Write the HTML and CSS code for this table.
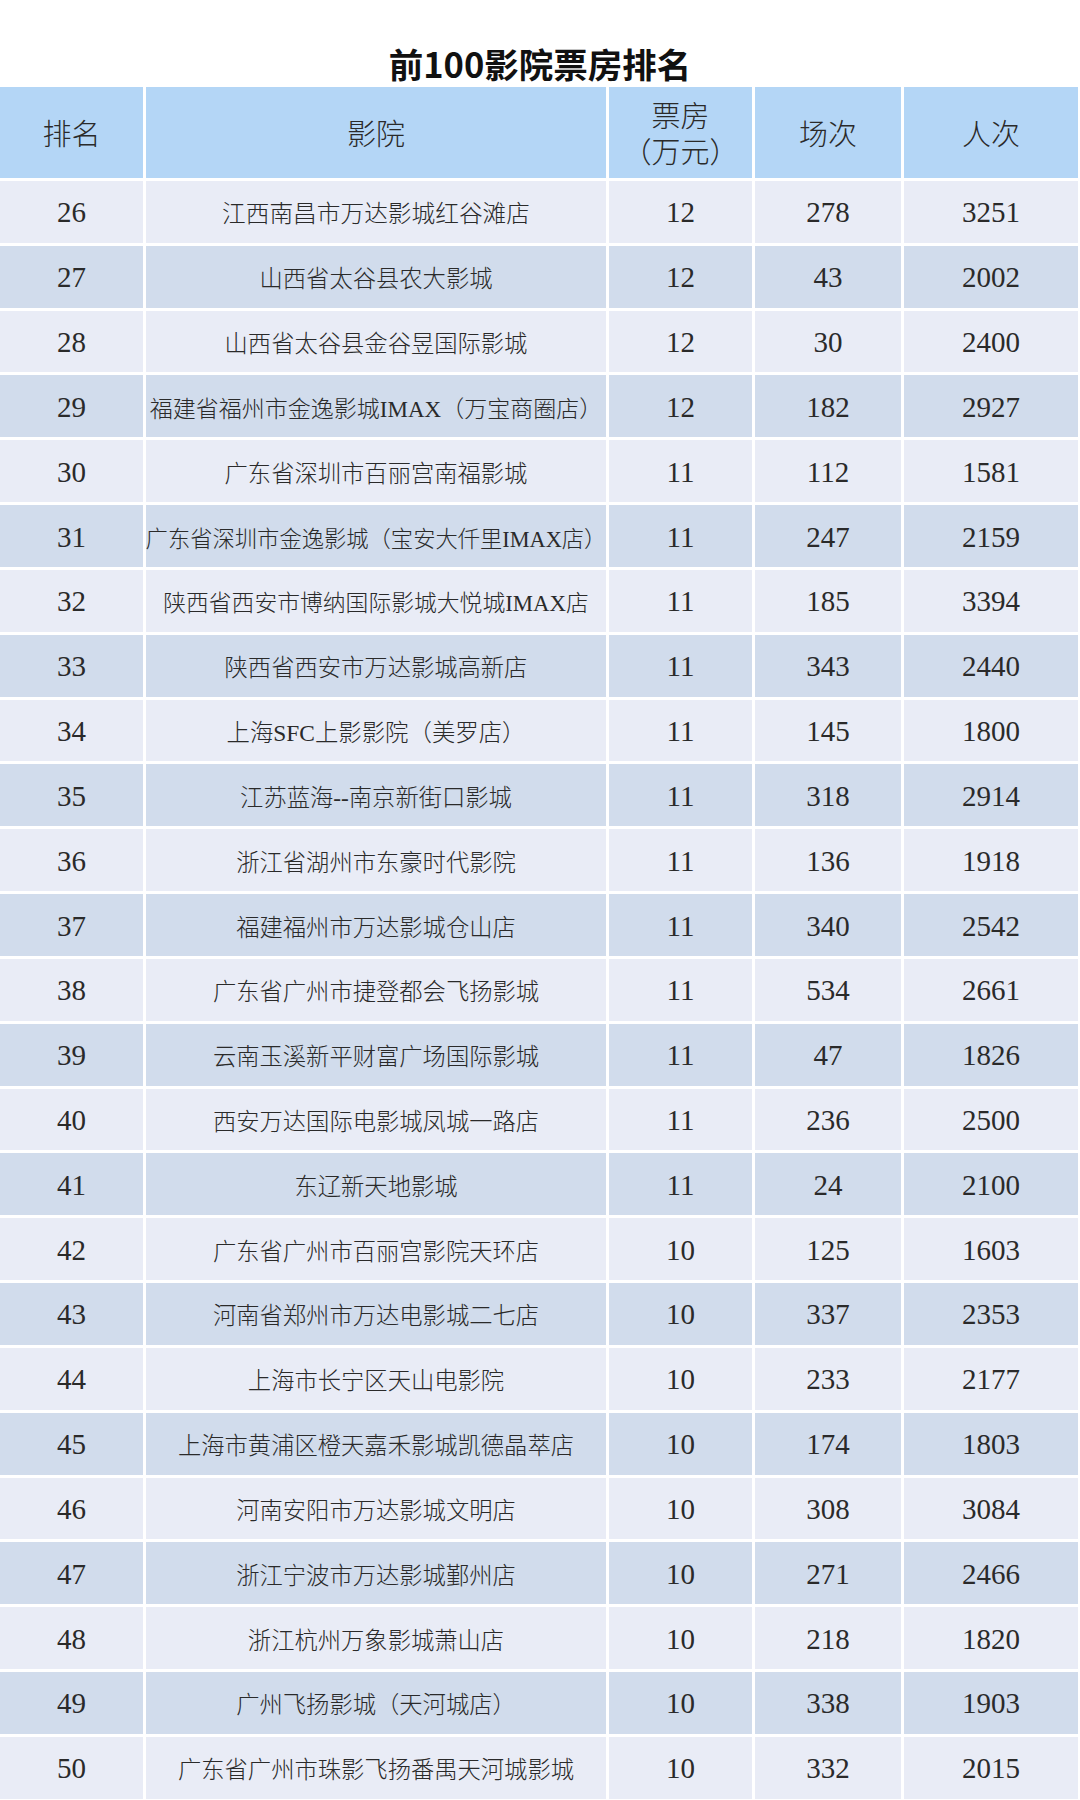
FILE: index.html
```html
<!DOCTYPE html>
<html lang="zh-CN">
<head>
<meta charset="utf-8">
<title>前100影院票房排名</title>
<link rel="stylesheet" href="styles.css">
</head>
<body>
<h1 class="title">前100影院票房排名</h1>
<div class="table">
  <div class="row head">
    <div class="cell">排名</div>
    <div class="cell">影院</div>
    <div class="cell two">票房<br>（万元）</div>
    <div class="cell">场次</div>
    <div class="cell">人次</div>
  </div>
  <div class="row light"><div class="cell num">26</div><div class="cell name s237">江西南昌市万达影城红谷滩店</div><div class="cell num">12</div><div class="cell num">278</div><div class="cell num">3251</div></div>
  <div class="row dark"><div class="cell num">27</div><div class="cell name">山西省太谷县农大影城</div><div class="cell num">12</div><div class="cell num">43</div><div class="cell num">2002</div></div>
  <div class="row light"><div class="cell num">28</div><div class="cell name">山西省太谷县金谷昱国际影城</div><div class="cell num">12</div><div class="cell num">30</div><div class="cell num">2400</div></div>
  <div class="row dark"><div class="cell num">29</div><div class="cell name s230">福建省福州市金逸影城IMAX（万宝商圈店）</div><div class="cell num">12</div><div class="cell num">182</div><div class="cell num">2927</div></div>
  <div class="row light"><div class="cell num">30</div><div class="cell name">广东省深圳市百丽宫南福影城</div><div class="cell num">11</div><div class="cell num">112</div><div class="cell num">1581</div></div>
  <div class="row dark"><div class="cell num">31</div><div class="cell name s223">广东省深圳市金逸影城（宝安大仟里IMAX店）</div><div class="cell num">11</div><div class="cell num">247</div><div class="cell num">2159</div></div>
  <div class="row light"><div class="cell num">32</div><div class="cell name s228">陕西省西安市博纳国际影城大悦城IMAX店</div><div class="cell num">11</div><div class="cell num">185</div><div class="cell num">3394</div></div>
  <div class="row dark"><div class="cell num">33</div><div class="cell name">陕西省西安市万达影城高新店</div><div class="cell num">11</div><div class="cell num">343</div><div class="cell num">2440</div></div>
  <div class="row light"><div class="cell num">34</div><div class="cell name s234">上海SFC上影影院（美罗店）</div><div class="cell num">11</div><div class="cell num">145</div><div class="cell num">1800</div></div>
  <div class="row dark"><div class="cell num">35</div><div class="cell name">江苏蓝海--南京新街口影城</div><div class="cell num">11</div><div class="cell num">318</div><div class="cell num">2914</div></div>
  <div class="row light"><div class="cell num">36</div><div class="cell name">浙江省湖州市东豪时代影院</div><div class="cell num">11</div><div class="cell num">136</div><div class="cell num">1918</div></div>
  <div class="row dark"><div class="cell num">37</div><div class="cell name">福建福州市万达影城仓山店</div><div class="cell num">11</div><div class="cell num">340</div><div class="cell num">2542</div></div>
  <div class="row light"><div class="cell num">38</div><div class="cell name">广东省广州市捷登都会飞扬影城</div><div class="cell num">11</div><div class="cell num">534</div><div class="cell num">2661</div></div>
  <div class="row dark"><div class="cell num">39</div><div class="cell name">云南玉溪新平财富广场国际影城</div><div class="cell num">11</div><div class="cell num">47</div><div class="cell num">1826</div></div>
  <div class="row light"><div class="cell num">40</div><div class="cell name">西安万达国际电影城凤城一路店</div><div class="cell num">11</div><div class="cell num">236</div><div class="cell num">2500</div></div>
  <div class="row dark"><div class="cell num">41</div><div class="cell name">东辽新天地影城</div><div class="cell num">11</div><div class="cell num">24</div><div class="cell num">2100</div></div>
  <div class="row light"><div class="cell num">42</div><div class="cell name">广东省广州市百丽宫影院天环店</div><div class="cell num">10</div><div class="cell num">125</div><div class="cell num">1603</div></div>
  <div class="row dark"><div class="cell num">43</div><div class="cell name">河南省郑州市万达电影城二七店</div><div class="cell num">10</div><div class="cell num">337</div><div class="cell num">2353</div></div>
  <div class="row light"><div class="cell num">44</div><div class="cell name">上海市长宁区天山电影院</div><div class="cell num">10</div><div class="cell num">233</div><div class="cell num">2177</div></div>
  <div class="row dark"><div class="cell num">45</div><div class="cell name">上海市黄浦区橙天嘉禾影城凯德晶萃店</div><div class="cell num">10</div><div class="cell num">174</div><div class="cell num">1803</div></div>
  <div class="row light"><div class="cell num">46</div><div class="cell name">河南安阳市万达影城文明店</div><div class="cell num">10</div><div class="cell num">308</div><div class="cell num">3084</div></div>
  <div class="row dark"><div class="cell num">47</div><div class="cell name">浙江宁波市万达影城鄞州店</div><div class="cell num">10</div><div class="cell num">271</div><div class="cell num">2466</div></div>
  <div class="row light"><div class="cell num">48</div><div class="cell name">浙江杭州万象影城萧山店</div><div class="cell num">10</div><div class="cell num">218</div><div class="cell num">1820</div></div>
  <div class="row dark"><div class="cell num">49</div><div class="cell name">广州飞扬影城（天河城店）</div><div class="cell num">10</div><div class="cell num">338</div><div class="cell num">1903</div></div>
  <div class="row light"><div class="cell num">50</div><div class="cell name">广东省广州市珠影飞扬番禺天河城影城</div><div class="cell num">10</div><div class="cell num">332</div><div class="cell num">2015</div></div>
</div>
</body>
</html>
```

FILE: styles.css
```css
html, body {
  margin: 0;
  padding: 0;
  background: #ffffff;
}

body {
  width: 1080px;
  font-family: "Liberation Serif", "Noto Sans CJK SC", serif;
  color: #2a2a2a;
}

.title {
  margin: 0;
  height: 87px;
  box-sizing: border-box;
  padding-top: 46px;
  font-family: "Noto Sans CJK SC", "Noto Sans", sans-serif;
  font-weight: 700;
  font-size: 34.5px;
  line-height: 35px;
  text-align: center;
  color: #111111;
}

.table {
  display: flex;
  flex-direction: column;
  gap: 3px;
  width: 1078px;
}

.row {
  display: grid;
  grid-template-columns: 143px 460px 143px 146px 174px;
  column-gap: 3px;
  height: 61.83px;
}

.row.head {
  height: 91px;
}

.cell {
  display: flex;
  align-items: center;
  justify-content: center;
  text-align: center;
  white-space: nowrap;
  font-weight: 300;
}

.head .cell {
  background: #b4d6f6;
  font-size: 29px;
  line-height: 36px;
  padding-top: 4px;
  box-sizing: border-box;
  color: #2a2a2a;
}

.light .cell {
  background: #e9ecf6;
}

.dark .cell {
  background: #d1dcec;
}

.num {
  font-size: 29px;
  padding-top: 2px;
  box-sizing: border-box;
}

.name {
  font-size: 23.3px;
  padding-top: 1px;
  box-sizing: border-box;
}

.name.s237 { font-size: 23.7px; }
.name.s234 { font-size: 23.4px; }
.name.s230 { font-size: 23px; }
.name.s228 { font-size: 22.8px; }
.name.s223 { font-size: 22.3px; }
```
